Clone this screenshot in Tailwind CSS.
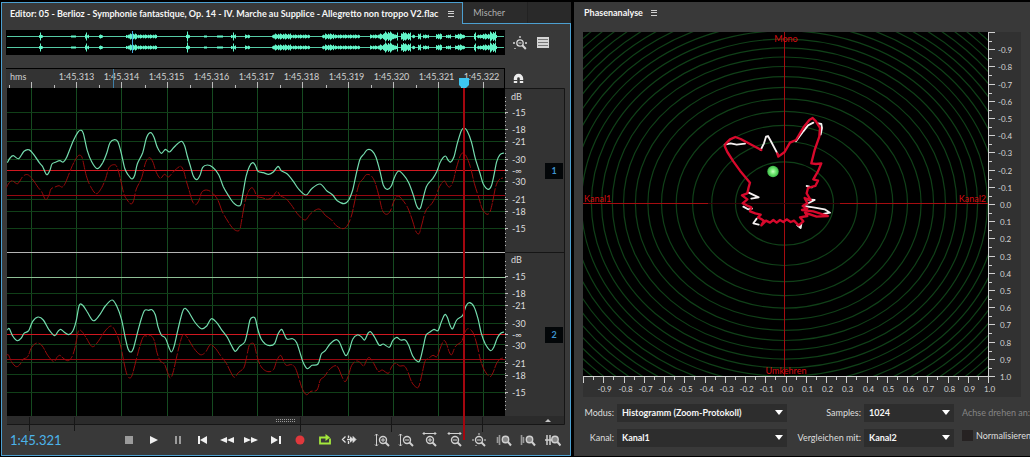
<!DOCTYPE html>
<html lang="de">
<head>
<meta charset="utf-8">
<title>Editor – Phasenanalyse</title>
<script src="https://cdn.jsdelivr.net/npm/@tailwindcss/browser@4"></script>
</head>
<body class="min-h-screen bg-black font-['Lato',sans-serif] text-[9px] text-[#dedede]">
<main class="grid grid-cols-[minmax(0,570fr)_minmax(0,456fr)] gap-[3px] overflow-hidden pt-[2px] pb-px pl-px">

  <!-- Editor panel -->
  <section class="flex min-w-0 flex-col">
    <div class="flex h-[22px]">
      <button class="flex items-center gap-[10px] border-t border-r border-l border-[#4c9fd0] bg-[#393939] pr-2 pl-2 font-bold whitespace-nowrap text-[#f6f6f6]">
        Editor: 05 - Berlioz - Symphonie fantastique, Op. 14 - IV. Marche au Supplice - Allegretto non troppo V2.flac
        <svg class="h-[6px] w-[6px]" viewBox="0 0 6 6" stroke="#d0d0d0"><path d="M0 .5h6M0 2.500h6M0 5.500h6"/></svg>
      </button>
      <div class="flex min-w-0 flex-1 border-b border-[#4c9fd0] bg-[#292929]">
        <button class="w-[65px] border-r border-[#222] bg-[#2b2b2b] pl-[10px] text-left text-[#b0b0b0]">Mischer</button>
      </div>
    </div>

    <div class="flex flex-1 flex-col border-r border-b border-l border-[#4c9fd0] bg-[#393939] pr-[5px] pl-1">
      <div class="relative">
        <div class="grid grid-cols-[1fr_60px] pt-[6px]">
          <svg class="h-[25px] w-full bg-black" viewBox="6 30 499 25" preserveAspectRatio="none" fill="none">
            <path d="M7 36.5H504M7 47.5H504" stroke="#55c9a4"/>
            <path id="overview" stroke="#62f5c8"/>
            <path d="M132.500 31V53" stroke="#45a7dc"/>
          </svg>
          <div class="flex items-center gap-[10px] pl-2">
            <button aria-label="Zoom zurücksetzen"><svg class="h-[14px] w-[14px]" viewBox="0 0 14 14" fill="none" stroke="#d8d8d8"><circle cx="7" cy="7" r="3.200" stroke-width="1.300"/><path d="M5.500 7h3"/><path d="M9.300 9.300l3.500 3.700" stroke-width="2"/><path d="M7 0v2M0 7h2M12 7h2M2 12v1" stroke-width="1.300"/></svg></button>
            <button aria-label="Spuren"><svg class="h-[11px] w-[12px]" viewBox="0 0 12 11"><path fill="#d5d5d5" d="M0 0h12v11H0z"/><path stroke="#777" d="M1 2.500h10M1 5.500h10M1 8.500h10"/></svg></button>
          </div>
        </div>

        <div class="grid grid-cols-[1fr_60px] pt-[13px]">
          <div class="relative h-5 border-t border-r border-black bg-[#333] text-[#d0d0d0]">
            <div class="flex pt-[2px] leading-3">
              <span class="w-[48px] pl-1">hms</span>
              <span class="flex-1 text-center">1:45.313</span><span class="flex-1 text-center">1:45.314</span><span class="flex-1 text-center">1:45.315</span><span class="flex-1 text-center">1:45.316</span><span class="flex-1 text-center">1:45.317</span><span class="flex-1 text-center">1:45.318</span><span class="flex-1 text-center">1:45.319</span><span class="flex-1 text-center">1:45.320</span><span class="flex-1 text-center">1:45.321</span><span class="flex-1 text-center">1:45.322</span>
            </div>
            <svg class="absolute inset-0 h-full w-full" viewBox="6 69 498 19" preserveAspectRatio="none">
              <path id="ruler" stroke="#bdbdbd"/>
              <path d="M113.500 69V88" stroke="#3d7fa8"/>
            </svg>
          </div>
          <div class="flex items-center pl-2"><button aria-label="Einrasten"><svg class="h-[11px] w-[11px]" viewBox="0 0 11 11"><path d="M2.500 10V5.500a3 3 0 0 1 6 0V10" fill="none" stroke="#ececec" stroke-width="3.400"/><path d="M0 7.500h4.500M6.500 7.500H11" stroke="#393939"/></svg></button></div>
        </div>

        <div class="grid grid-cols-[1fr_60px]">
          <svg class="h-[328px] w-full bg-black" viewBox="6 88 499 328" preserveAspectRatio="none" fill="none">
            <path fill="#393939" d="M6 88h1v328H6z"/>
            <path id="vgrid" stroke="#154a20"/>
            <path stroke="#103f18" d="M7 112.500H505M7 129.500H505M7 141.500H505M7 159.500H505M7 181.500H505M7 199.500H505M7 211.500H505M7 228.500H505M7 293.500H505M7 305.500H505M7 323.500H505M7 344.500H505M7 362.500H505M7 374.500H505M7 392.500H505"/>
            <path stroke="#b4b4b4" d="M7 252.500H505"/>
            <path stroke="#8fbf96" d="M7 277.500H505"/>
            <path stroke="#d01820" d="M7 170.500H505M7 334.500H505"/>
            <path stroke="#960810" d="M7 195.500H505M7 359.500H505"/>
            <path id="r1" stroke="#980b0b" stroke-dasharray="9 1 14 2" transform="translate(-1 25)"/>
            <path id="r2" stroke="#980b0b" stroke-dasharray="9 1 14 2" transform="translate(-1 26)"/>
            <path id="g1" stroke="#74dcae" stroke-width="1.200"/>
            <path id="g2" stroke="#74dcae" stroke-width="1.200"/>
          </svg>
          <svg class="h-[328px] w-[60px]" viewBox="505 88 60 328" font-size="9" fill="#dcdcdc">
            <path fill="#333" d="M505 88h60v328h-60z"/>
            <path d="M505 88.500h59.500V416M505 252.500h59" stroke="#151515" fill="none"/>
            <path id="dbticks" stroke="#bbb"/>
            <g id="dblabels"></g>
            <path fill="#030608" d="M545 163h18v16h-18zM545 327h18v16h-18z"/>
            <g fill="#3d93cf" font-size="9" font-weight="700" text-anchor="middle"><text x="554" y="174">1</text><text x="554" y="338">2</text></g>
          </svg>
        </div>

        <svg class="block h-2 w-full overflow-visible" viewBox="6 416 559 8" preserveAspectRatio="none" fill="none">
          <path fill="#2b2b2b" d="M7 416h558v8H7z"/>
          <path stroke="#161616" d="M7 424.500H564.500V416M29.500 417V431M74.500 417V431M300.500 417V432M391.500 417V432M482.500 417V432"/>
          <path stroke="#999" stroke-dasharray="1 1" d="M276 419.500H296M276 421.500H296"/>
          <path fill="#c4c4c4" d="M545 422h6l-3-3z"/>
        </svg>

        <!-- Playhead -->
        <svg class="pointer-events-none absolute top-[54px] left-[81%] h-[362px] w-[10px]" viewBox="0 0 10 362"><path fill="#a3070f" d="M4 10h2v352H4z"/><path fill="#3cc6f2" d="M0 0h10v7l-3 3H3L0 7z"/></svg>
      </div>

      <div class="flex h-[31px] items-center">
        <output class="w-[111px] shrink-0 pt-[2px] pl-1 text-[13px] text-[#4cb4ea]">1:45.321</output>
        <div class="flex min-w-0 flex-[246_1_0px] text-[#f0f0f0]">
          <button aria-label="Stopp" class="flex h-4 flex-1 items-center justify-center"><svg class="h-4 w-4" viewBox="0 0 16 16"><path fill="#9b9b9b" d="M4 4h8v8H4z"/></svg></button>
          <button aria-label="Wiedergabe" class="flex h-4 flex-1 items-center justify-center"><svg class="h-4 w-4" viewBox="0 0 16 16" fill="currentColor"><path d="M4 4l8 4-8 4z"/></svg></button>
          <button aria-label="Pause" class="flex h-4 flex-1 items-center justify-center"><svg class="h-4 w-4" viewBox="0 0 16 16" fill="#9b9b9b"><path d="M5 4h2v8H5zM9 4h2v8H9z"/></svg></button>
          <button aria-label="Zum Anfang" class="flex h-4 flex-1 items-center justify-center"><svg class="h-4 w-4" viewBox="0 0 16 16" fill="currentColor"><path d="M3 4h2v8H3zM12 4v8L5 8z"/></svg></button>
          <button aria-label="Zurückspulen" class="flex h-4 flex-1 items-center justify-center"><svg class="h-4 w-4" viewBox="0 0 16 16" fill="currentColor"><path d="M8 5v6L1 8zM15 5v6L8 8z"/></svg></button>
          <button aria-label="Vorspulen" class="flex h-4 flex-1 items-center justify-center"><svg class="h-4 w-4" viewBox="0 0 16 16" fill="currentColor"><path d="M1 5v6l7-3zM8 5v6l7-3z"/></svg></button>
          <button aria-label="Zum Ende" class="flex h-4 flex-1 items-center justify-center"><svg class="h-4 w-4" viewBox="0 0 16 16" fill="currentColor"><path d="M3 4v8l7-4zM11 4h2v8h-2z"/></svg></button>
          <button aria-label="Aufnahme" class="flex h-4 flex-1 items-center justify-center"><svg class="h-4 w-4" viewBox="0 0 16 16"><circle cx="8" cy="8" r="4.500" fill="#e0383c"/></svg></button>
          <button aria-label="Schleife" class="flex h-4 flex-1 items-center justify-center"><svg class="h-4 w-4" viewBox="0 0 16 16" fill="none" stroke="#a4e83c" stroke-width="1.800"><path d="M5 5.500H3v6h10V6.500M5 5.500h4"/><path d="M8.500 2L13 5.500 8.500 9z" fill="#a4e83c" stroke="none"/></svg></button>
          <button aria-label="Auswahl überspringen" class="flex h-4 flex-1 items-center justify-center"><svg class="h-4 w-4" viewBox="0 0 16 16" fill="none" stroke="#e0e0e0" stroke-width="1.300"><path d="M4.500 4.500L1.500 7.500l3 3M7.500 3.500v2.500M7.500 9v3M6 7.500h7"/><path d="M9 4.500l3 3-3 3M12 4.500l3 3-3 3z" fill="#e0e0e0" stroke-width=".8"/></svg></button>
        </div>
        <div class="flex min-w-0 flex-[197_1_0px] pl-2 text-[#d0d0d0]">
          <button aria-label="Amplitude vergrößern" class="flex h-4 flex-1 items-center justify-center"><svg class="h-4 w-4" viewBox="0 0 16 16" fill="none" stroke="currentColor"><path d="M2.500 2v12M1 3.500L2.500 2 4 3.500M1 12.500L2.500 14 4 12.500"/><circle cx="9" cy="8" r="3.500" stroke-width="1.400"/><path d="M7 8h4M9 6v4"/><path d="M11.500 10.500L15 14" stroke-width="2"/></svg></button>
          <button aria-label="Amplitude verkleinern" class="flex h-4 flex-1 items-center justify-center"><svg class="h-4 w-4" viewBox="0 0 16 16" fill="none" stroke="currentColor"><path d="M2.500 2v12M1 3.500L2.500 2 4 3.500M1 12.500L2.500 14 4 12.500"/><circle cx="9" cy="8" r="3.500" stroke-width="1.400"/><path d="M7 8h4"/><path d="M11.500 10.500L15 14" stroke-width="2"/></svg></button>
          <button aria-label="Zeit vergrößern" class="flex h-4 flex-1 items-center justify-center"><svg class="h-4 w-4" viewBox="0 0 16 16" fill="none" stroke="currentColor"><path d="M1 1.500h13M2.500 0L1 1.500 2.500 3M12.500 0L14 1.500 12.500 3"/><circle cx="8" cy="8" r="3.500" stroke-width="1.400"/><path d="M6 8h4M8 6v4"/><path d="M10.500 10.500L14 14" stroke-width="2"/></svg></button>
          <button aria-label="Zeit verkleinern" class="flex h-4 flex-1 items-center justify-center"><svg class="h-4 w-4" viewBox="0 0 16 16" fill="none" stroke="currentColor"><path d="M1 1.500h13M2.500 0L1 1.500 2.500 3M12.500 0L14 1.500 12.500 3"/><circle cx="8" cy="8" r="3.500" stroke-width="1.400"/><path d="M6 8h4"/><path d="M10.500 10.500L14 14" stroke-width="2"/></svg></button>
          <button aria-label="Vollständig verkleinern" class="flex h-4 flex-1 items-center justify-center"><svg class="h-4 w-4" viewBox="0 0 16 16" fill="none" stroke="currentColor"><circle cx="8" cy="8" r="3.500" stroke-width="1.400"/><path d="M6 8h4M8 1v2M1 8h2M13 8h2M5 13v1"/><path d="M10.500 10.500L14 14" stroke-width="2"/></svg></button>
          <button aria-label="Am In-Punkt vergrößern" class="flex h-4 flex-1 items-center justify-center"><svg class="h-4 w-4" viewBox="0 0 16 16" fill="none" stroke="currentColor"><path d="M3.500 3v10M1.500 5v6" stroke="#999" stroke-width="1.600"/><circle cx="9.500" cy="7.500" r="3.200" fill="#888" stroke-width="1.400"/><path d="M12 10l3 3.500" stroke-width="2"/></svg></button>
          <button aria-label="Am Out-Punkt vergrößern" class="flex h-4 flex-1 items-center justify-center"><svg class="h-4 w-4" viewBox="0 0 16 16" fill="none" stroke="currentColor"><path d="M1.500 3v10M3.500 5v6" stroke="#999" stroke-width="1.600"/><circle cx="9.500" cy="7.500" r="3.200" fill="#888" stroke-width="1.400"/><path d="M12 10l3 3.500" stroke-width="2"/></svg></button>
          <button aria-label="Auswahl vergrößern" class="flex h-4 flex-1 items-center justify-center"><svg class="h-4 w-4" viewBox="0 0 16 16" fill="none" stroke="currentColor"><path d="M2 3v10M5 3v10M0 8h7" stroke-width="1.500"/><circle cx="10" cy="7.500" r="3.200" fill="#888" stroke-width="1.400"/><path d="M12.500 10l3 3.500" stroke-width="2"/></svg></button>
        </div>
      </div>
    </div>
  </section>

  <!-- Phase panel -->
  <section class="flex min-w-0 flex-col overflow-hidden bg-[#393939] pl-[9px]">
    <button class="flex h-[22px] items-center gap-2 self-start pl-px font-bold text-[#f6f6f6]">Phasenanalyse
      <svg class="h-[6px] w-[6px]" viewBox="0 0 6 6" stroke="#d0d0d0"><path d="M0 .5h6M0 2.500h6M0 5.500h6"/></svg>
    </button>
    <div class="pt-2 pr-[9px]">
      <svg class="block w-full" viewBox="583 32 438 365" fill="none">
        <defs>
          <clipPath id="plot"><path d="M583 32h405v344H583z"/></clipPath>
          <radialGradient id="ball"><stop offset="0" stop-color="#c8ffc0"/><stop offset=".5" stop-color="#6fe870"/><stop offset="1" stop-color="#3cb848"/></radialGradient>
        </defs>
        <path fill="#313131" d="M583 32h438v365H583z"/>
        <path fill="#000" d="M583 32h405v344H583z"/>
        <g id="rings" clip-path="url(#plot)" stroke="#104018" stroke-width="1.200"></g>
        <path stroke="#a50c10" d="M784.500 32V376M583 203.500H708M840 203.500H988"/>
        <path stroke="#3a0508" d="M708 203.500H840"/>
        <g transform="translate(690 100) scale(.3333)" stroke-linejoin="round" stroke-linecap="round">
          <path stroke="#f4f0f0" stroke-width="5.500" d="M104 134L122 130 140 134 165 131M212 150L222 130 228 110 234 108 244 126 262 160M318 124L340 94 354 76 370 68M384 70L394 72 396 84 392 104M350 258L366 262M176 278L206 292 184 296M160 320L174 328 186 326M350 298L374 300 350 312M340 318L370 322 404 328 420 338 400 342M200 356L190 370 206 374M322 376L332 384 334 372"/>
          <path stroke="#d8092c" stroke-width="7" d="M262 160L265 170 284 156 300 128 318 120 342 80 358 60 368 54 378 64 390 84 388 110 374 150 364 190 378 192 394 190 384 214 370 238 384 242 376 258 354 264 350 280 362 300 344 294 352 310 338 318 352 326 336 330 370 334 414 348 380 350 345 338 352 348 330 352 340 364 326 376 312 362 302 366 290 358 280 366 270 360 260 368 250 360 240 368 228 362 214 376 222 362 204 352 212 344 196 340 180 334 184 322 170 316 158 310 172 298 156 286 172 280 176 262 180 248 150 212 130 184 112 156 104 138 108 130 120 118 136 111 152 117 180 132 214 150"/>
        </g>
        <circle cx="773" cy="171.500" r="5.700" fill="url(#ball)"/>
        <g fill="#d40c10" font-size="9"><text x="786" y="42" text-anchor="middle">Mono</text><text x="786" y="374" text-anchor="middle">Umkehren</text><text x="584" y="202">Kanal1</text><text x="986" y="202" text-anchor="end">Kanal2</text></g>
        <path id="axes" stroke="#d0d0d0"/>
        <g id="axislabels" font-size="8" fill="#d4d4d4"></g>
      </svg>
    </div>
    <div class="grid grid-cols-[31px_1fr_71px_90px_73px] items-center gap-x-[3px] gap-y-[7px] pt-[7px] pb-2 whitespace-nowrap">
      <label for="modus" class="text-right">Modus:</label>
      <div class="relative"><select id="modus" class="block h-[18px] w-full appearance-none bg-[#2d2d2d] pl-[5px] font-bold text-[#f6f6f6]"><option>Histogramm (Zoom-Protokoll)</option></select><svg class="pointer-events-none absolute top-[6px] right-1 h-[5px] w-2" viewBox="0 0 8 5" fill="#fff"><path d="M0 0h8L4 5z"/></svg></div>
      <label for="samples" class="text-right">Samples:</label>
      <div class="relative"><select id="samples" class="block h-[18px] w-full appearance-none bg-[#2d2d2d] pl-[5px] font-bold text-[#f6f6f6]"><option>1024</option></select><svg class="pointer-events-none absolute top-[6px] right-1 h-[5px] w-2" viewBox="0 0 8 5" fill="#fff"><path d="M0 0h8L4 5z"/></svg></div>
      <span class="pl-[5px] text-[#858585]">Achse drehen an:</span>
      <label for="kanal" class="text-right">Kanal:</label>
      <div class="relative"><select id="kanal" class="block h-[18px] w-full appearance-none bg-[#2d2d2d] pl-[5px] font-bold text-[#f6f6f6]"><option>Kanal1</option></select><svg class="pointer-events-none absolute top-[6px] right-1 h-[5px] w-2" viewBox="0 0 8 5" fill="#fff"><path d="M0 0h8L4 5z"/></svg></div>
      <label for="vergleich" class="text-right">Vergleichen mit:</label>
      <div class="relative"><select id="vergleich" class="block h-[18px] w-full appearance-none bg-[#2d2d2d] pl-[5px] font-bold text-[#f6f6f6]"><option>Kanal2</option></select><svg class="pointer-events-none absolute top-[6px] right-1 h-[5px] w-2" viewBox="0 0 8 5" fill="#fff"><path d="M0 0h8L4 5z"/></svg></div>
      <label class="flex items-center gap-[3px] self-start pl-[5px]"><input type="checkbox" class="h-[11px] w-[11px] shrink-0 appearance-none bg-[#262222] checked:bg-[#4c9fd0]">Normalisieren</label>
    </div>
  </section>
</main>

<script>
const $ = id => document.getElementById(id);

// Smooth curve through sample points; samples are stored in thirds of a unit.
function curve(list, top) {
  const n = list.split(/[ ,]+/).map(Number), p = [];
  for (let i = 0; i < n.length; i += 2) p.push([n[i] / 3, n[i + 1] / 3 + top]);
  let d = 'M' + p[0];
  for (let i = 0; i < p.length - 1; i++) {
    const a = p[i - 1] || p[i], b = p[i], c = p[i + 1], e = p[i + 2] || c;
    d += 'C' + [b[0] + (c[0] - a[0]) / 6, b[1] + (c[1] - a[1]) / 6, c[0] - (e[0] - b[0]) / 6, c[1] - (e[1] - b[1]) / 6, c[0], c[1]].map(v => v.toFixed(1)).join(' ');
  }
  return d;
}
const ch1 = curve('22,248 30,234 40,227 56,236 72,214 86,209 100,222 118,248 128,260 140,284 150,270 156,252 168,246 180,242 190,246 200,232 220,182 235,155 243,151 250,160 262,212 275,245 292,266 308,248 320,220 330,188 344,179 354,186 364,220 374,265 384,284 396,297 404,286 412,252 428,218 440,172 452,158 462,172 472,202 484,220 496,208 508,216 520,204 532,192 545,184 554,198 562,228 572,262 580,288 590,299 600,286 608,262 622,255 638,262 656,284 670,320 686,348 700,368 712,377 722,374 728,345 738,290 748,260 758,248 766,256 774,274 790,278 806,283 820,276 834,259 844,272 862,282 880,304 895,326 918,345 935,326 960,312 980,332 998,345 1012,362 1032,371 1046,360 1058,330 1068,285 1080,238 1092,222 1102,209 1116,212 1128,232 1140,274 1150,315 1162,328 1174,318 1184,290 1196,273 1210,284 1226,308 1240,345 1250,378 1260,386 1268,360 1280,318 1298,296 1310,275 1322,244 1336,228 1344,240 1352,246 1362,230 1372,190 1384,152 1393,144 1402,154 1414,185 1426,235 1440,280 1450,312 1464,328 1474,318 1482,285 1490,245 1500,224 1512,219', 80);
const ch2 = curve('22,240 28,236 38,258 52,272 64,264 72,250 86,242 98,214 114,201 130,210 146,238 164,257 174,244 182,238 192,246 206,254 218,244 228,215 238,166 248,166 262,186 280,212 298,196 316,168 336,150 350,168 364,206 376,264 384,296 392,306 400,296 412,250 424,206 434,181 446,181 456,179 466,194 474,230 484,255 496,264 506,290 514,306 522,290 534,238 548,184 556,175 566,186 584,216 604,236 620,228 634,206 650,218 664,238 682,262 694,286 706,304 718,290 734,276 742,248 750,210 758,202 766,206 774,240 784,268 796,282 810,287 824,280 834,252 845,238 854,256 862,268 878,266 890,278 902,315 910,338 922,356 936,346 954,342 964,312 976,302 990,282 1008,269 1018,276 1028,300 1038,317 1048,300 1058,268 1072,255 1084,260 1094,270 1104,250 1112,245 1124,262 1138,286 1150,282 1168,292 1178,272 1190,262 1202,270 1216,270 1226,286 1238,318 1252,334 1260,330 1270,290 1278,256 1290,246 1302,238 1314,242 1324,216 1334,194 1342,202 1350,226 1358,236 1370,210 1388,196 1398,168 1408,158 1422,170 1434,206 1444,250 1456,282 1472,302 1482,290 1492,264 1502,250 1512,246', 250);
$('g1').setAttribute('d', ch1); $('r1').setAttribute('d', ch1);
$('g2').setAttribute('d', ch2); $('r2').setAttribute('d', ch2);

// Time ruler and vertical grid
let ruler = '', grid = '';
for (let i = 0; i < 11; i++) {
  const x = Math.floor(31.4 + i * 45.25) + .5;
  grid += `M${x} 88V416`;
  ruler += `M${x} 82V88M${x - 22} 85V88`;
}
$('vgrid').setAttribute('d', grid); $('ruler').setAttribute('d', ruler);

// Overview: bursts as start, end, amplitude
const bursts = [[39,42,2],[40,40,4],[71,75,1],[85,88,2],[86,86,4],[99,102,2],[126,156,2],[129,136,3],[186,189,2],[187,187,5],[204,206,1],[217,222,1],[231,235,2],[233,233,4],[245,249,2],[272,309,2],[274,290,3],[322,359,2],[325,333,3],[370,396,2],[379,394,3],[384,392,5],[397,397,4],[401,410,4],[402,404,5],[412,414,2],[418,420,3],[423,428,2],[436,441,3],[446,450,2],[455,464,2],[457,462,3],[474,475,4],[477,496,2],[482,492,3],[490,495,5]];
let ov = '';
bursts.forEach(([a, b, h]) => {
  for (let x = a; x <= b; x++) {
    const k = Math.max(1, h - (a === b ? 0 : (x * 7 % 5) * h / 9));
    ov += `M${x + .5} ${36.5 - k}V${36.5 + k}M${x + .5} ${47.5 - k}V${47.5 + k}`;
  }
});
$('overview').setAttribute('d', ov);

// Level scale
let ticks = '', labels = '';
[0, 164].forEach((o, c) => {
  labels += `<text x="511" y="${c ? 263 : 100}">dB</text>`;
  [[112.5,'-15'],[129.5,'-18'],[141.5,'-21'],[159.5,'-30'],[170.5,'-∞'],[181.5,'-30'],[199.5,'-21'],[211.5,'-18'],[228.5,'-15']].forEach(([y, t]) => {
    ticks += `M505 ${y + o}h3`;
    labels += `<text x="512" y="${y + o + 3.5}">${t}</text>`;
  });
  for (let y = 97.5; y < 248; y += 4) ticks += `M505 ${y + o}h1`;
});
$('dbticks').setAttribute('d', ticks); $('dblabels').innerHTML = labels;

// Phase plot rings
let rings = '';
for (let n = 1; n < 23; n++) {
  const r = 49 * Math.pow(n, .572);
  rings += `<ellipse cx="784.5" cy="203.5" rx="${r.toFixed(1)}" ry="${(r * .851).toFixed(1)}"/>`;
}
$('rings').innerHTML = rings;

// Phase plot axes
let ax = 'M988.5 33V376.500M583 376.500H988', al = '';
for (let i = 0; i <= 20; i++) {
  const y = Math.round(32 + i * 17.2) + .5, x = Math.round(583 + i * 20.25) + .5, v = ((i - 10) / 10).toFixed(1);
  ax += `M988 ${y}h7M${x} 376v7`;
  if (i < 20) ax += `M988 ${y + 9}h4M${x + 10} 376v4`;
  if (i) al += `<text x="${i < 10 ? 998 : 1000}" y="${y + 3}">${v}</text><text x="${x + 1}" y="392" text-anchor="middle">${v}</text>`;
}
$('axes').setAttribute('d', ax); $('axislabels').innerHTML = al;
</script>
</body>
</html>
